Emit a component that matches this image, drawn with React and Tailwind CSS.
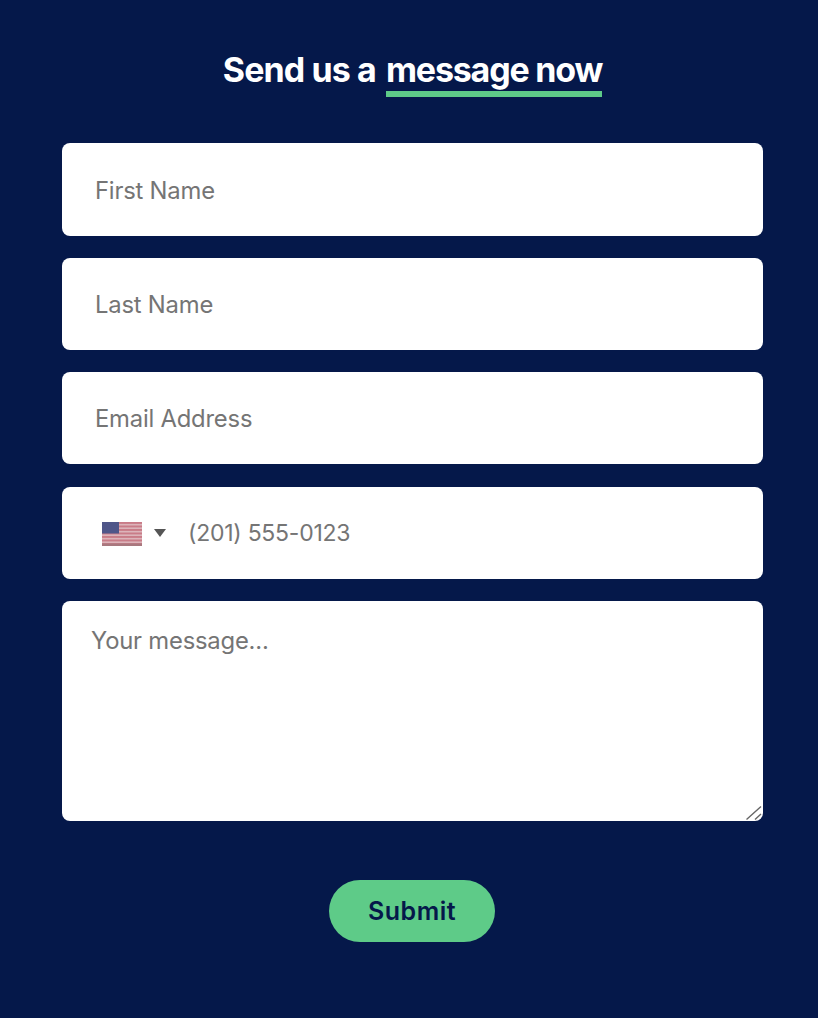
import React from "react";

function Flag() {
  const stripes = [0, 1, 2, 3, 4, 5, 6];
  return (
    <svg width="40" height="24" viewBox="0 0 40 24" className="shrink-0 block mt-[1px] blur-[0.5px]">
      <rect width="40" height="24" fill="#dcb4ba" />
      {stripes.map((i) => (
        <rect key={i} y={i * 3.5} width="40" height="1.9" fill="#c97c88" />
      ))}
      <rect y="21.5" width="40" height="2.5" fill="#a8787e" />
      <rect width="17" height="11.5" fill="#4f5689" />
    </svg>
  );
}

const fieldCls =
  "w-full h-[92px] rounded-lg bg-white pl-[33px] pr-4 pt-[1px] text-[23.8px] tracking-[-0.2px] text-[#757575] placeholder:text-[#757575] outline-none";

export default function App() {
  return (
    <div className="min-h-[1018px] bg-[#05184a] px-[62px] pr-[55px] pt-[47px] font-['Inter','Open_Sans',sans-serif]">
      <h2 className="text-center text-[34px] leading-[46px] font-bold tracking-[-0.9px] text-white mb-[46px]">
        Send us a{" "}
        <span className="inline-block ml-[3px] border-b-[6px] border-[#5ecb88] leading-[43px] tracking-[-1.2px]">
          message now
        </span>
      </h2>

      <form className="flex flex-col" onSubmit={(e) => e.preventDefault()}>
        <input placeholder="First Name" className={`${fieldCls} h-[93px] mb-[22px]`} />
        <input placeholder="Last Name" className={`${fieldCls} mb-[22px]`} />
        <input placeholder="Email Address" className={`${fieldCls} mb-[23px]`} />

        <div className="flex items-center h-[92px] rounded-lg bg-white pl-[40px] mb-[22px]">
          <Flag />
          <span className="ml-[12px] w-0 h-0 border-x-[6px] border-x-transparent border-t-[8px] border-t-[#555555]" />
          <input
            placeholder="(201) 555-0123"
            className="ml-[22px] pt-[1px] flex-1 min-w-0 text-[23px] tracking-[-0.25px] text-[#757575] placeholder:text-[#757575] outline-none"
          />
        </div>

        <div className="relative">
          <textarea
            placeholder="Your message..."
            className="w-full h-[220px] rounded-lg bg-white px-[29px] py-[24px] text-[23.8px] leading-[32px] tracking-[-0.2px] text-[#757575] placeholder:text-[#757575] outline-none block resize-none"
          />
          <svg width="18" height="16" viewBox="0 0 18 16" className="absolute right-0 bottom-0 pointer-events-none">
            <path d="M1.5 14.5 L16 1.5 M10 14.5 L16 9" stroke="#666666" strokeWidth="1.4" fill="none" />
          </svg>
        </div>

        <div className="flex justify-center pr-[2px] mt-[59px]">
          <button className="w-[166px] h-[62px] rounded-full bg-[#5ecb88] pt-[2px] pl-[1px] text-[25px] tracking-[0.5px] font-semibold text-[#05184a]">
            Submit
          </button>
        </div>
      </form>
    </div>
  );
}
